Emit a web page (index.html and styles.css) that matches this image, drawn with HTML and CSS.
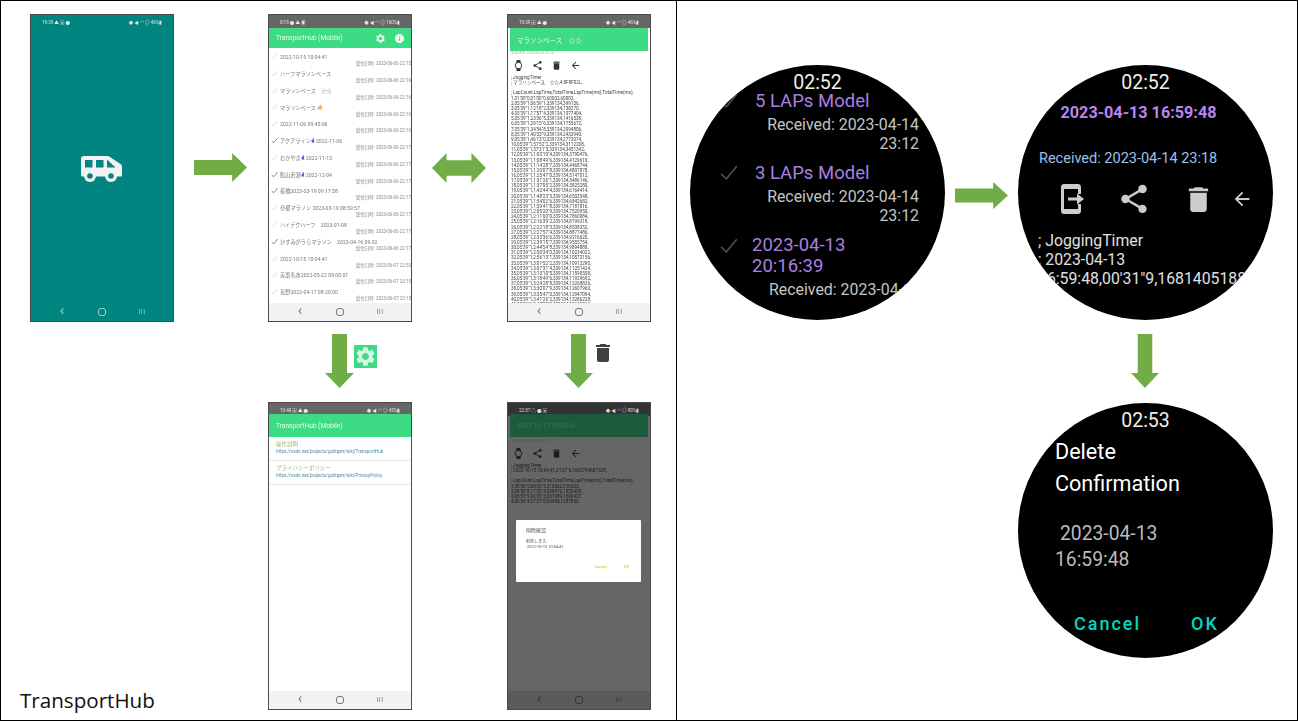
FILE: index.html
```html
<!DOCTYPE html>
<html>
<head>
    <title>TransportHub</title>
    <link rel="stylesheet" href="styles.css">
</head>
<body>
    <svg class="defs" width="0" height="0">
        <symbol id="i-gear" viewBox="0 0 24 24"><path d="M19.14 12.94c.04-.3.06-.61.06-.94 0-.32-.02-.64-.07-.94l2.03-1.58a.49.49 0 0 0 .12-.61l-1.92-3.32a.488.488 0 0 0-.59-.22l-2.39.96c-.5-.38-1.03-.7-1.62-.94l-.36-2.54a.484.484 0 0 0-.48-.41h-3.84c-.24 0-.43.17-.47.41l-.36 2.54c-.59.24-1.13.57-1.62.94l-2.39-.96c-.22-.08-.47 0-.59.22L2.74 8.87c-.12.21-.08.47.12.61l2.03 1.58c-.05.3-.09.63-.09.94s.02.64.07.94l-2.03 1.58a.49.49 0 0 0-.12.61l1.92 3.32c.12.22.37.29.59.22l2.39-.96c.5.38 1.03.7 1.62.94l.36 2.54c.05.24.24.41.48.41h3.84c.24 0 .44-.17.47-.41l.36-2.54c.59-.24 1.13-.56 1.62-.94l2.39.96c.22.08.47 0 .59-.22l1.92-3.32c.12-.22.07-.47-.12-.61l-2.01-1.58zM12 15.6c-1.98 0-3.6-1.62-3.6-3.6s1.62-3.6 3.6-3.6 3.6 1.62 3.6 3.6-1.62 3.6-3.6 3.6z"/></symbol>
        <symbol id="i-info" viewBox="0 0 24 24"><path d="M12 2C6.48 2 2 6.48 2 12s4.48 10 10 10 10-4.48 10-10S17.52 2 12 2zm1 15h-2v-6h2v6zm0-8h-2V7h2v2z"/></symbol>
        <symbol id="i-share" viewBox="0 0 24 24"><path d="M18 16.08c-.76 0-1.44.3-1.96.77L8.91 12.7c.05-.23.09-.46.09-.7s-.04-.47-.09-.7l7.05-4.11c.54.5 1.25.81 2.04.81 1.66 0 3-1.34 3-3s-1.34-3-3-3-3 1.34-3 3c0 .24.04.47.09.7L8.04 9.81C7.5 9.31 6.79 9 6 9c-1.66 0-3 1.34-3 3s1.34 3 3 3c.79 0 1.5-.31 2.04-.81l7.12 4.16c-.05.21-.08.43-.08.65 0 1.61 1.31 2.92 2.92 2.92 1.61 0 2.92-1.31 2.92-2.92s-1.31-2.92-2.92-2.92z"/></symbol>
        <symbol id="i-trash" viewBox="0 0 24 24"><path d="M6 19c0 1.1.9 2 2 2h8c1.1 0 2-.9 2-2V7H6v12zM19 4h-3.5l-1-1h-5l-1 1H5v2h14V4z"/></symbol>
        <symbol id="i-back" viewBox="0 0 24 24"><path d="M20 11H7.83l5.59-5.59L12 4l-8 8 8 8 1.41-1.41L7.83 13H20v-2z"/></symbol>
        <symbol id="i-watch" viewBox="0 0 24 24"><path d="M20 12c0-2.54-1.19-4.81-3.04-6.27L16 0H8l-.95 5.73C5.19 7.19 4 9.45 4 12s1.19 4.81 3.05 6.27L8 24h8l.96-5.73C18.81 16.81 20 14.54 20 12zM6 12c0-3.31 2.69-6 6-6s6 2.69 6 6-2.69 6-6 6-6-2.69-6-6z"/></symbol>
        <symbol id="i-check" viewBox="0 0 24 24"><path d="M2 13l7 7L23 3" fill="none" stroke="currentColor" stroke-width="2"/></symbol>
        <symbol id="i-run" viewBox="0 0 10 12"><circle cx="6" cy="1.6" r="1.5"/><path d="M4 3.6h3l1.6 2.4H7L6.6 5.4 6 7.4l1.8 1.4V12H6.4V9.6L4.4 8.2 3.4 12H2l1.4-6.4-1.2.8v1.8H1V5.8z"/></symbol>
        <symbol id="i-thumb" viewBox="0 0 12 12"><path d="M1 5.5h2.4V11H1zM4 5.5 6.4 1c1.2 0 1.6 1 1.3 2L7.3 4.6H11l-1.2 6.4H4z"/></symbol>
        <symbol id="i-van" viewBox="0 0 41 26"><path fill-rule="evenodd" d="M3 0h23c1 0 1.800.3 2.600.8L39.500 8c1 .7 1.500 1.600 1.500 2.800V19.500c0 .6-.4 1-1 1H1.500c-.9 0-1.500-.6-1.500-1.500V3c0-1.800 1.200-3 3-3zM4 4v7.500h7.500V4zM15 4v7.500h7.500V4zM26 4v7.500h8.500L26.500 4z"/><circle cx="9" cy="20" r="6"/><circle cx="30" cy="20" r="6"/><circle cx="9" cy="20" r="2.800" fill="#008580"/><circle cx="30" cy="20" r="2.800" fill="#008580"/></symbol>
    </svg>

    <main class="slide">
        <div class="divider"></div>

        <!-- スプラッシュ -->
        <section class="phone phone-splash">
            <div class="status status-clear">
                <span>19:39 ▲ ▣ ●</span><span class="status-right">◆ ◀ ◠ ◎ 46%▮</span>
            </div>
            <div class="splash-body">
                <svg class="van"><use href="#i-van"/></svg>
            </div>
            <div class="nav nav-clear"><span class="nav-back">‹</span><span class="nav-home"></span><span class="nav-recent">III</span></div>
        </section>

        <!-- 一覧 -->
        <section class="phone phone-list">
            <div class="status">
                <span>0:18 ● ▲ ◉</span><span class="status-right">◆ ◀ ◠ ◎ 100%▮</span>
            </div>
            <header class="appbar">
                <span class="appbar-title">TransportHub (Mobile)</span>
                <svg class="appbar-icon"><use href="#i-gear"/></svg>
                <svg class="appbar-icon"><use href="#i-info"/></svg>
            </header>
            <ul class="files">
                <li class="file"><svg class="tick"><use href="#i-check"/></svg><span class="file-name">2022-10-15 10:04:41</span><span class="file-meta">受信日時: 2023-06-06 22:15</span></li>
                <li class="file"><svg class="tick"><use href="#i-check"/></svg><span class="file-name">ハーフマラソンベース</span><span class="file-meta">受信日時: 2023-06-06 22:16</span></li>
                <li class="file"><svg class="tick"><use href="#i-check"/></svg><span class="file-name">マラソンベース　☆☆</span><span class="file-meta">受信日時: 2023-06-06 22:16</span></li>
                <li class="file"><svg class="tick"><use href="#i-check"/></svg><span class="file-name">マラソンベース<svg class="emoji emoji-thumb"><use href="#i-thumb"/></svg></span><span class="file-meta">受信日時: 2023-06-06 22:16</span></li>
                <li class="file"><svg class="tick"><use href="#i-check"/></svg><span class="file-name">2022-11-06 09:45:06</span><span class="file-meta">受信日時: 2023-06-06 22:16</span></li>
                <li class="file file-done"><svg class="tick"><use href="#i-check"/></svg><span class="file-name">アクアライン<svg class="emoji"><use href="#i-run"/></svg>2022-11-06</span><span class="file-meta">受信日時: 2023-06-06 22:17</span></li>
                <li class="file"><svg class="tick"><use href="#i-check"/></svg><span class="file-name">おかやま<svg class="emoji"><use href="#i-run"/></svg>2022-11-13</span><span class="file-meta">受信日時: 2023-06-06 22:17</span></li>
                <li class="file file-done"><svg class="tick"><use href="#i-check"/></svg><span class="file-name">館山若潮<svg class="emoji"><use href="#i-run"/></svg>2022-12-04</span><span class="file-meta">受信日時: 2023-06-06 22:17</span></li>
                <li class="file file-done"><svg class="tick"><use href="#i-check"/></svg><span class="file-name">板橋2023-03-19 09:17:58</span><span class="file-meta">受信日時: 2023-06-06 22:17</span></li>
                <li class="file"><svg class="tick"><use href="#i-check"/></svg><span class="file-name">奈都マラソン 2023-03-19 08:59:57</span><span class="file-meta">受信日時: 2023-06-06 22:17</span></li>
                <li class="file"><svg class="tick"><use href="#i-check"/></svg><span class="file-name">ハイテクハーフ　2023-01-08</span><span class="file-meta">受信日時: 2023-06-06 22:17</span></li>
                <li class="file file-done"><svg class="tick"><use href="#i-check"/></svg><span class="file-name">かすみがうらマラソン　2023-04-16 09:02</span><span class="file-meta">受信日時: 2023-06-06 22:17</span></li>
                <li class="file"><svg class="tick"><use href="#i-check"/></svg><span class="file-name">2022-10-15 10:04:41</span><span class="file-meta">受信日時: 2023-06-07 22:53</span></li>
                <li class="file"><svg class="tick"><use href="#i-check"/></svg><span class="file-name">美葉名水2022-05-22 09:00:01</span><span class="file-meta">受信日時: 2023-06-07 23:15</span></li>
                <li class="file"><svg class="tick"><use href="#i-check"/></svg><span class="file-name">長野2022-04-17 08:20:00</span><span class="file-meta">受信日時: 2023-06-07 23:15</span></li>
            </ul>
            <div class="nav"><span class="nav-back">‹</span><span class="nav-home"></span><span class="nav-recent">III</span></div>
        </section>

        <!-- 詳細 -->
        <section class="phone phone-detail">
            <div class="status">
                <span>19:39 ▣ ▲ ●</span><span class="status-right">◆ ◀ ◠ ◎ 46%▮</span>
            </div>
            <div class="detail">
                <header class="appbar appbar-inset"><span class="appbar-title">マラソンベース　☆☆</span></header>
                <div class="received">受信日時: 2023-06-06 22:16</div>
                <div class="tools">
                    <svg class="tool"><use href="#i-watch"/></svg>
                    <svg class="tool"><use href="#i-share"/></svg>
                    <svg class="tool"><use href="#i-trash"/></svg>
                    <svg class="tool"><use href="#i-back"/></svg>
                </div>
                <pre class="log">; JoggingTimer
; マラソンベース　☆☆,4.8F8F02L,

; LapCount,LapTime,TotalTime,LapTime(ms),TotalTime(ms);
1,01'00"0,01'00"0,60002,60002,
2,05'39"1,06'39"1,339134,399136,
3,05'39"1,12'18"2,339134,738270,
4,05'39"1,17'57"4,339134,1077404,
5,05'39"1,23'36"5,339134,1416538,
6,05'39"1,29'15"6,339134,1755672,
7,05'39"1,34'54"8,339134,2094806,
8,05'39"1,40'33"9,339134,2433940,
9,05'39"1,46'13"0,339134,2773074,
10,05'39"1,51'52"2,339134,3112208,
11,05'39"1,57'31"3,339134,3451342,
12,05'39"1,1:03'10"4,339134,3790476,
13,05'39"1,1:08'49"6,339134,4129610,
14,05'39"1,1:14'28"7,339134,4468744,
15,05'39"1,1:20'07"8,339134,4807878,
16,05'39"1,1:25'47"0,339134,5147012,
17,05'39"1,1:31'26"1,339134,5486146,
18,05'39"1,1:37'05"2,339134,5825280,
19,05'39"1,1:42'44"4,339134,6164414,
20,05'39"1,1:48'23"5,339134,6503548,
21,05'39"1,1:54'02"6,339134,6842682,
22,05'39"1,1:59'41"8,339134,7181816,
23,05'39"1,2:05'20"9,339134,7520950,
24,05'39"1,2:11'00"0,339134,7860084,
25,05'39"1,2:16'39"2,339134,8199218,
26,05'39"1,2:22'18"3,339134,8538352,
27,05'39"1,2:27'57"4,339134,8877486,
28,05'39"1,2:33'36"6,339134,9216620,
29,05'39"1,2:39'15"7,339134,9555754,
30,05'39"1,2:44'54"8,339134,9894888,
31,05'39"1,2:50'34"0,339134,10234022,
32,05'39"1,2:56'13"1,339134,10573156,
33,05'39"1,3:01'52"2,339134,10912290,
34,05'39"1,3:07'31"4,339134,11251424,
35,05'39"1,3:13'10"5,339134,11590558,
36,05'39"1,3:18'49"6,339134,11929692,
37,05'39"1,3:24'28"8,339134,12268826,
38,05'39"1,3:30'07"9,339134,12607960,
39,05'39"1,3:35'47"0,339134,12947094,
40,05'39"1,3:41'26"2,339134,13286228,
41,05'39"1,3:47'05"3,339134,13625362,</pre>
            </div>
            <div class="nav"><span class="nav-back">‹</span><span class="nav-home"></span><span class="nav-recent">III</span></div>
        </section>

        <!-- 設定 -->
        <section class="phone phone-settings">
            <div class="status">
                <span>19:40 ▣ ▲ ●</span><span class="status-right">◆ ◀ ◠ ◎ 45%▮</span>
            </div>
            <header class="appbar"><span class="appbar-title">TransportHub (Mobile)</span></header>
            <div class="prefs">
                <div class="pref">
                    <div class="pref-title">操作説明</div>
                    <div class="pref-url">https://osdn.net/projects/goldgen/wiki/TransportHub</div>
                </div>
                <div class="pref">
                    <div class="pref-title">プライバシーポリシー</div>
                    <div class="pref-url">https://osdn.net/projects/goldgen/wiki/PrivacyPolicy</div>
                </div>
            </div>
            <div class="nav"><span class="nav-back">‹</span><span class="nav-home"></span><span class="nav-recent">III</span></div>
        </section>

        <!-- 削除確認 -->
        <section class="phone phone-dim">
            <div class="status status-dark">
                <span>22:07 ☁ ● ▣</span><span class="status-right">◆ ◀ ◠ ◎ 80%▮</span>
            </div>
            <div class="detail">
                <header class="appbar appbar-inset"><span class="appbar-title">2022-10-15 10:04:41</span></header>
                <div class="received">受信日時: 2023-06-07 22:53</div>
                <div class="tools">
                    <svg class="tool"><use href="#i-watch"/></svg>
                    <svg class="tool"><use href="#i-share"/></svg>
                    <svg class="tool"><use href="#i-trash"/></svg>
                    <svg class="tool"><use href="#i-back"/></svg>
                </div>
                <pre class="log">; JoggingTimer
; 2022-10-15 10:04:41,21'27"6,1665794681528,

; LapCount,LapTime,TotalTime,LapTime(ms),TotalTime(ms);
1,08'36"5,08'36"5,516562,516562,
2,08'58"8,17'35"4,538876,1055438,
3,08'57"9,26'33"3,537989,1593427,
4,00'54"4,27'27"8,54408,1287836,</pre>
                <div class="dialog">
                    <div class="dialog-title">削除確認</div>
                    <div class="dialog-text">削除します。<br>&nbsp;2022-10-15 10:04:41</div>
                    <div class="dialog-actions"><span>Cancel</span><span>OK</span></div>
                </div>
            </div>
            <div class="nav nav-dark"><span class="nav-back">‹</span><span class="nav-home"></span><span class="nav-recent">III</span></div>
        </section>

        <!-- 矢印 -->
        <div class="arrow arrow-right arrow-a"></div>
        <div class="arrow arrow-both arrow-b"></div>
        <div class="arrow arrow-down arrow-c"></div>
        <div class="arrow arrow-down arrow-d"></div>
        <div class="arrow arrow-right arrow-e"></div>
        <div class="arrow arrow-down arrow-f"></div>

        <div class="badge-gear"><svg><use href="#i-gear"/></svg></div>
        <svg class="badge-trash"><use href="#i-trash"/></svg>

        <!-- ウォッチ -->
        <section class="watch watch-list">
            <div class="clock">02:52</div>
            <div class="lap">
                <div class="lap-head"><svg class="lap-tick"><use href="#i-check"/></svg><span class="lap-name">5 LAPs Model</span></div>
                <div class="lap-date">Received: 2023-04-14<br>23:12</div>
            </div>
            <div class="lap">
                <div class="lap-head"><svg class="lap-tick"><use href="#i-check"/></svg><span class="lap-name">3 LAPs Model</span></div>
                <div class="lap-date">Received: 2023-04-14<br>23:12</div>
            </div>
            <div class="lap">
                <div class="lap-head lap-head-long"><svg class="lap-tick"><use href="#i-check"/></svg><span class="lap-name">2023-04-13<br>20:16:39</span></div>
                <div class="lap-date lap-date-cut">Received: 2023-04-14</div>
            </div>
        </section>

        <section class="watch watch-detail">
            <div class="clock">02:52</div>
            <div class="watch-title">2023-04-13 16:59:48</div>
            <div class="watch-received">Received: 2023-04-14 23:18</div>
            <div class="watch-tools">
                <svg class="wt wt-send" viewBox="0 0 23 30"><path d="M3 0h14c1.700 0 3 1.300 3 3v7h-3V5H3v20h14v-5h3v7c0 1.700-1.300 3-3 3H3c-1.700 0-3-1.300-3-3V3c0-1.700 1.300-3 3-3z"/><path d="M7 13.500h9V9.500l7 5.500-7 5.500v-4H7z"/></svg>
                <svg class="wt wt-share"><use href="#i-share"/></svg>
                <svg class="wt wt-trash"><use href="#i-trash"/></svg>
                <svg class="wt wt-back"><use href="#i-back"/></svg>
            </div>
            <div class="watch-log">; JoggingTimer<br>; 2023-04-13<br>16:59:48,00'31"9,1681405188</div>
        </section>

        <section class="watch watch-confirm">
            <div class="clock">02:53</div>
            <div class="confirm-title">Delete<br>Confirmation</div>
            <div class="confirm-text"><span class="confirm-indent">2023-04-13</span><br>16:59:48</div>
            <div class="confirm-actions"><span>Cancel</span><span>OK</span></div>
        </section>

        <div class="caption">TransportHub</div>
    </main>
</body>
</html>
```

FILE: styles.css
```css
body {
    margin: 0;
    background: #fff;
    font-family: Roboto, "Noto Sans CJK JP", sans-serif;
}

.defs {
    position: absolute;
}

.slide {
    position: relative;
    box-sizing: border-box;
    width: 1298px;
    height: 721px;
    border: 1px solid #000;
    overflow: hidden;
}

.divider {
    position: absolute;
    left: 675px;
    top: 0;
    bottom: 0;
    width: 1px;
    background: #000;
}

.caption {
    position: absolute;
    left: 19px;
    top: 685px;
    font-family: "Open Sans", sans-serif;
    font-size: 20.600px;
    line-height: 28px;
    color: #111;
}

/* phones */
.phone {
    position: absolute;
    box-sizing: border-box;
    width: 144px;
    height: 308px;
    display: flex;
    flex-direction: column;
    border: 1px solid #4a4a4a;
    background: #fff;
    overflow: hidden;
}

.phone-splash { left: 29px; top: 13px; background: #008580; }
.phone-list { left: 267px; top: 13px; }
.phone-detail { left: 506px; top: 13px; }
.phone-settings { left: 267px; top: 401px; }
.phone-dim { left: 506px; top: 401px; background: #666; }

.status {
    flex: none;
    height: 13px;
    display: flex;
    justify-content: space-between;
    align-items: center;
    padding: 0 11px;
    background: #666;
    color: #e6e6e6;
    font-size: 4.500px;
    filter: blur(0.3px);
}

.status-clear { background: transparent; }
.status-dark { background: #333; color: #ddd; }

.nav {
    flex: none;
    height: 18px;
    display: grid;
    grid-template-columns: repeat(3, 1fr);
    align-items: center;
    justify-items: center;
    padding: 0 11px;
    background: #f2f2f2;
    color: #777;
    filter: blur(0.3px);
}

.nav-clear { background: transparent; color: #a9d0cd; }
.nav-dark { background: #5b5b5b; color: #333; }

.nav-back { font-size: 15px; line-height: 15px; margin-top: -3px; }
.nav-recent { font-size: 7px; letter-spacing: 0.5px; }

.nav-home {
    width: 6px;
    height: 6px;
    border: 1px solid currentColor;
    border-radius: 3px;
}

.splash-body {
    flex: 1;
    display: flex;
    align-items: center;
    justify-content: center;
    padding: 0 1px 0 0;
}

.van {
    width: 41px;
    height: 26px;
    margin-top: 6px;
    fill: #f2f2f2;
}

.appbar {
    flex: none;
    height: 20px;
    display: flex;
    align-items: center;
    gap: 8px;
    padding: 0 6px 0 7px;
    background: #3ddc84;
    color: #eafbf1;
    font-size: 6.600px;
    filter: blur(0.3px);
}

.phone-settings .appbar {
    height: 23px;
    margin-top: -2px;
}

.appbar-title { flex: 1; white-space: nowrap; }

.appbar-icon {
    width: 11px;
    height: 11px;
    fill: #e6faee;
}

.files {
    flex: 1;
    margin: 0;
    padding: 1px 0 0;
    list-style: none;
    overflow: hidden;
    filter: blur(0.3px);
}

.file {
    position: relative;
    height: 16.800px;
    padding-left: 11px;
    color: #777;
}

.file-name {
    display: block;
    font-size: 5.200px;
    line-height: 6px;
    padding-top: 5px;
    white-space: nowrap;
}

.file-meta {
    display: block;
    font-size: 4.500px;
    line-height: 5px;
    text-align: right;
    white-space: nowrap;
    margin-top: 1px;
    color: #888;
}

.tick {
    position: absolute;
    left: 2px;
    top: 4px;
    width: 7px;
    height: 7px;
    color: #c8c8c8;
}

.file-done .tick { color: #333; }

.emoji {
    width: 4px;
    height: 5px;
    margin: 0 0.5px;
    fill: #2030d0;
    vertical-align: -0.5px;
}

.emoji-thumb {
    width: 6px;
    height: 6px;
    fill: #f0b040;
}

/* settings */
.prefs {
    flex: 1;
    filter: blur(0.3px);
}

.pref {
    box-sizing: border-box;
    height: 24px;
    padding: 3px 7px 0;
    border-bottom: 1px solid #e6e6e6;
    white-space: nowrap;
}

.pref-title {
    font-size: 5.500px;
    line-height: 8px;
    color: #9cba78;
}

.pref-url {
    font-size: 4.500px;
    line-height: 7px;
    color: #4a8f9c;
}

/* detail screen */
.detail {
    position: relative;
    flex: 1;
    overflow: hidden;
}

.appbar-inset {
    margin: 0 2px;
    height: 23px;
    font-size: 6.500px;
}

.received {
    font-size: 3.500px;
    line-height: 5px;
    padding-left: 3px;
    color: #aaa;
    filter: blur(0.3px);
}

.tools {
    height: 19px;
    display: flex;
    align-items: center;
    gap: 8px;
    padding-left: 5px;
    margin-bottom: 0;
}

.tool {
    width: 11px;
    height: 11px;
    fill: #333;
}

.log {
    margin: 0;
    padding-left: 3px;
    font-family: Roboto, "Noto Sans CJK JP", sans-serif;
    font-size: 4.600px;
    line-height: 5.150px;
    color: #444;
    filter: blur(0.3px);
}

.phone-dim .status,
.phone-dim .nav { filter: none; }

.phone-dim .appbar {
    margin-top: -2px;
    margin-bottom: 2px;
    background: #1c5c3c;
    color: #2f7a52;
}

.phone-dim .received { color: #555; }
.phone-dim .tool { fill: #1c1c1c; }
.phone-dim .log { color: #1c1c1c; }

.phone-dim .detail { overflow: visible; }

.dialog {
    position: absolute;
    left: 8px;
    top: 104px;
    box-sizing: border-box;
    width: 125px;
    height: 62px;
    padding: 7px 10px 0;
    background: #fff;
    border-radius: 1px;
    color: #555;
    filter: blur(0.3px);
}

.dialog-title { font-size: 5px; line-height: 7px; }

.dialog-text {
    margin-top: 5px;
    font-size: 4px;
    line-height: 5px;
}

.dialog-actions {
    display: flex;
    justify-content: flex-end;
    gap: 17px;
    margin-top: 15px;
    padding-right: 2px;
    font-size: 4px;
    font-weight: 500;
    color: #c5d83c;
}

/* arrows */
.arrow {
    position: absolute;
    background: #70ad47;
}

.arrow-right { clip-path: polygon(0 24%, 72% 24%, 72% 0, 100% 50%, 72% 100%, 72% 76%, 0 76%); }
.arrow-both { clip-path: polygon(0 50%, 27% 0, 27% 24%, 73% 24%, 73% 0, 100% 50%, 73% 100%, 73% 76%, 27% 76%, 27% 100%); }
.arrow-down { clip-path: polygon(24% 0, 76% 0, 76% 72%, 100% 72%, 50% 100%, 0 72%, 24% 72%); }

.arrow-a { left: 193px; top: 152px; width: 53px; height: 29px; }
.arrow-b { left: 431px; top: 152px; width: 54px; height: 30px; }
.arrow-c { left: 324px; top: 333px; width: 29px; height: 54px; }
.arrow-d { left: 563px; top: 333px; width: 29px; height: 54px; }
.arrow-e { left: 954px; top: 181px; width: 53px; height: 27px; }
.arrow-f { left: 1130px; top: 333px; width: 28px; height: 54px; }

.badge-gear {
    position: absolute;
    left: 353px;
    top: 344px;
    width: 23px;
    height: 23px;
    background: #3ddc84;
}

.badge-gear svg {
    display: block;
    width: 23px;
    height: 23px;
    fill: #d8f6e4;
}

.badge-trash {
    position: absolute;
    left: 590px;
    top: 340px;
    width: 24px;
    height: 24px;
    fill: #404040;
}

/* watches */
.watch {
    position: absolute;
    box-sizing: border-box;
    width: 255px;
    height: 255px;
    border-radius: 50%;
    background: #000;
    overflow: hidden;
    color: #ddd;
}

.watch-list { left: 689px; top: 64px; }
.watch-detail { left: 1017px; top: 64px; }
.watch-confirm { left: 1017px; top: 402px; }

.clock {
    position: relative;
    z-index: 1;
    padding-top: 7px;
    margin-bottom: -7px;
    font-size: 19.500px;
    line-height: 22px;
    text-align: center;
    color: #eee;
}

.lap { margin-bottom: 10px; }
.clock + .lap { margin-top: 3.500px; }

.lap-head {
    display: flex;
    align-items: center;
    gap: 16px;
    padding-left: 28px;
    margin-bottom: 3px;
}

.lap-head-long {
    align-items: flex-start;
    gap: 13px;
}

.lap-tick {
    flex: none;
    width: 21px;
    height: 18px;
    color: #555;
}

.lap-head-long .lap-tick { margin-top: 2px; }

.lap-name {
    font-size: 18.500px;
    line-height: 21px;
    color: #a97fe2;
    white-space: nowrap;
}

.lap-date {
    padding-right: 26px;
    font-size: 15.900px;
    line-height: 19px;
    text-align: right;
    color: #c4c4c4;
}

.lap-date-cut {
    padding: 0 0 0 79px;
    text-align: left;
    white-space: nowrap;
}

.watch-title {
    margin-top: 15px;
    padding-right: 14px;
    font-size: 16.200px;
    font-weight: 700;
    line-height: 22px;
    text-align: center;
    color: #b985ee;
}

.watch-received {
    margin-top: 25px;
    padding-left: 21px;
    font-size: 14.500px;
    line-height: 20px;
    color: #9cc0ec;
}

.watch-tools {
    display: flex;
    align-items: center;
    height: 32px;
    margin-top: 14px;
    padding-left: 43px;
    fill: #ccc;
}

.wt { flex: none; }
.wt-send { width: 23px; height: 30px; }
.wt-share { width: 34px; height: 34px; margin-left: 33px; }
.wt-trash { width: 33px; height: 33px; margin-left: 31px; }
.wt-back { width: 22px; height: 22px; margin-left: 16px; }

.watch-log {
    margin-top: 15.500px;
    padding-left: 20px;
    font-size: 15.800px;
    line-height: 19px;
    white-space: nowrap;
    color: #e0e0e0;
}

.confirm-title {
    margin-top: 11px;
    padding-left: 37px;
    font-size: 21.600px;
    line-height: 32px;
    color: #fff;
}

.confirm-text {
    margin-top: 21px;
    padding-left: 37px;
    font-size: 19.300px;
    line-height: 26px;
    color: #bbb;
}

.confirm-indent { padding-left: 5px; }

.confirm-actions {
    display: flex;
    gap: 50px;
    margin-top: 40px;
    padding-left: 56px;
    font-size: 18px;
    font-weight: 500;
    letter-spacing: 2px;
    color: #00d8c0;
}
```
